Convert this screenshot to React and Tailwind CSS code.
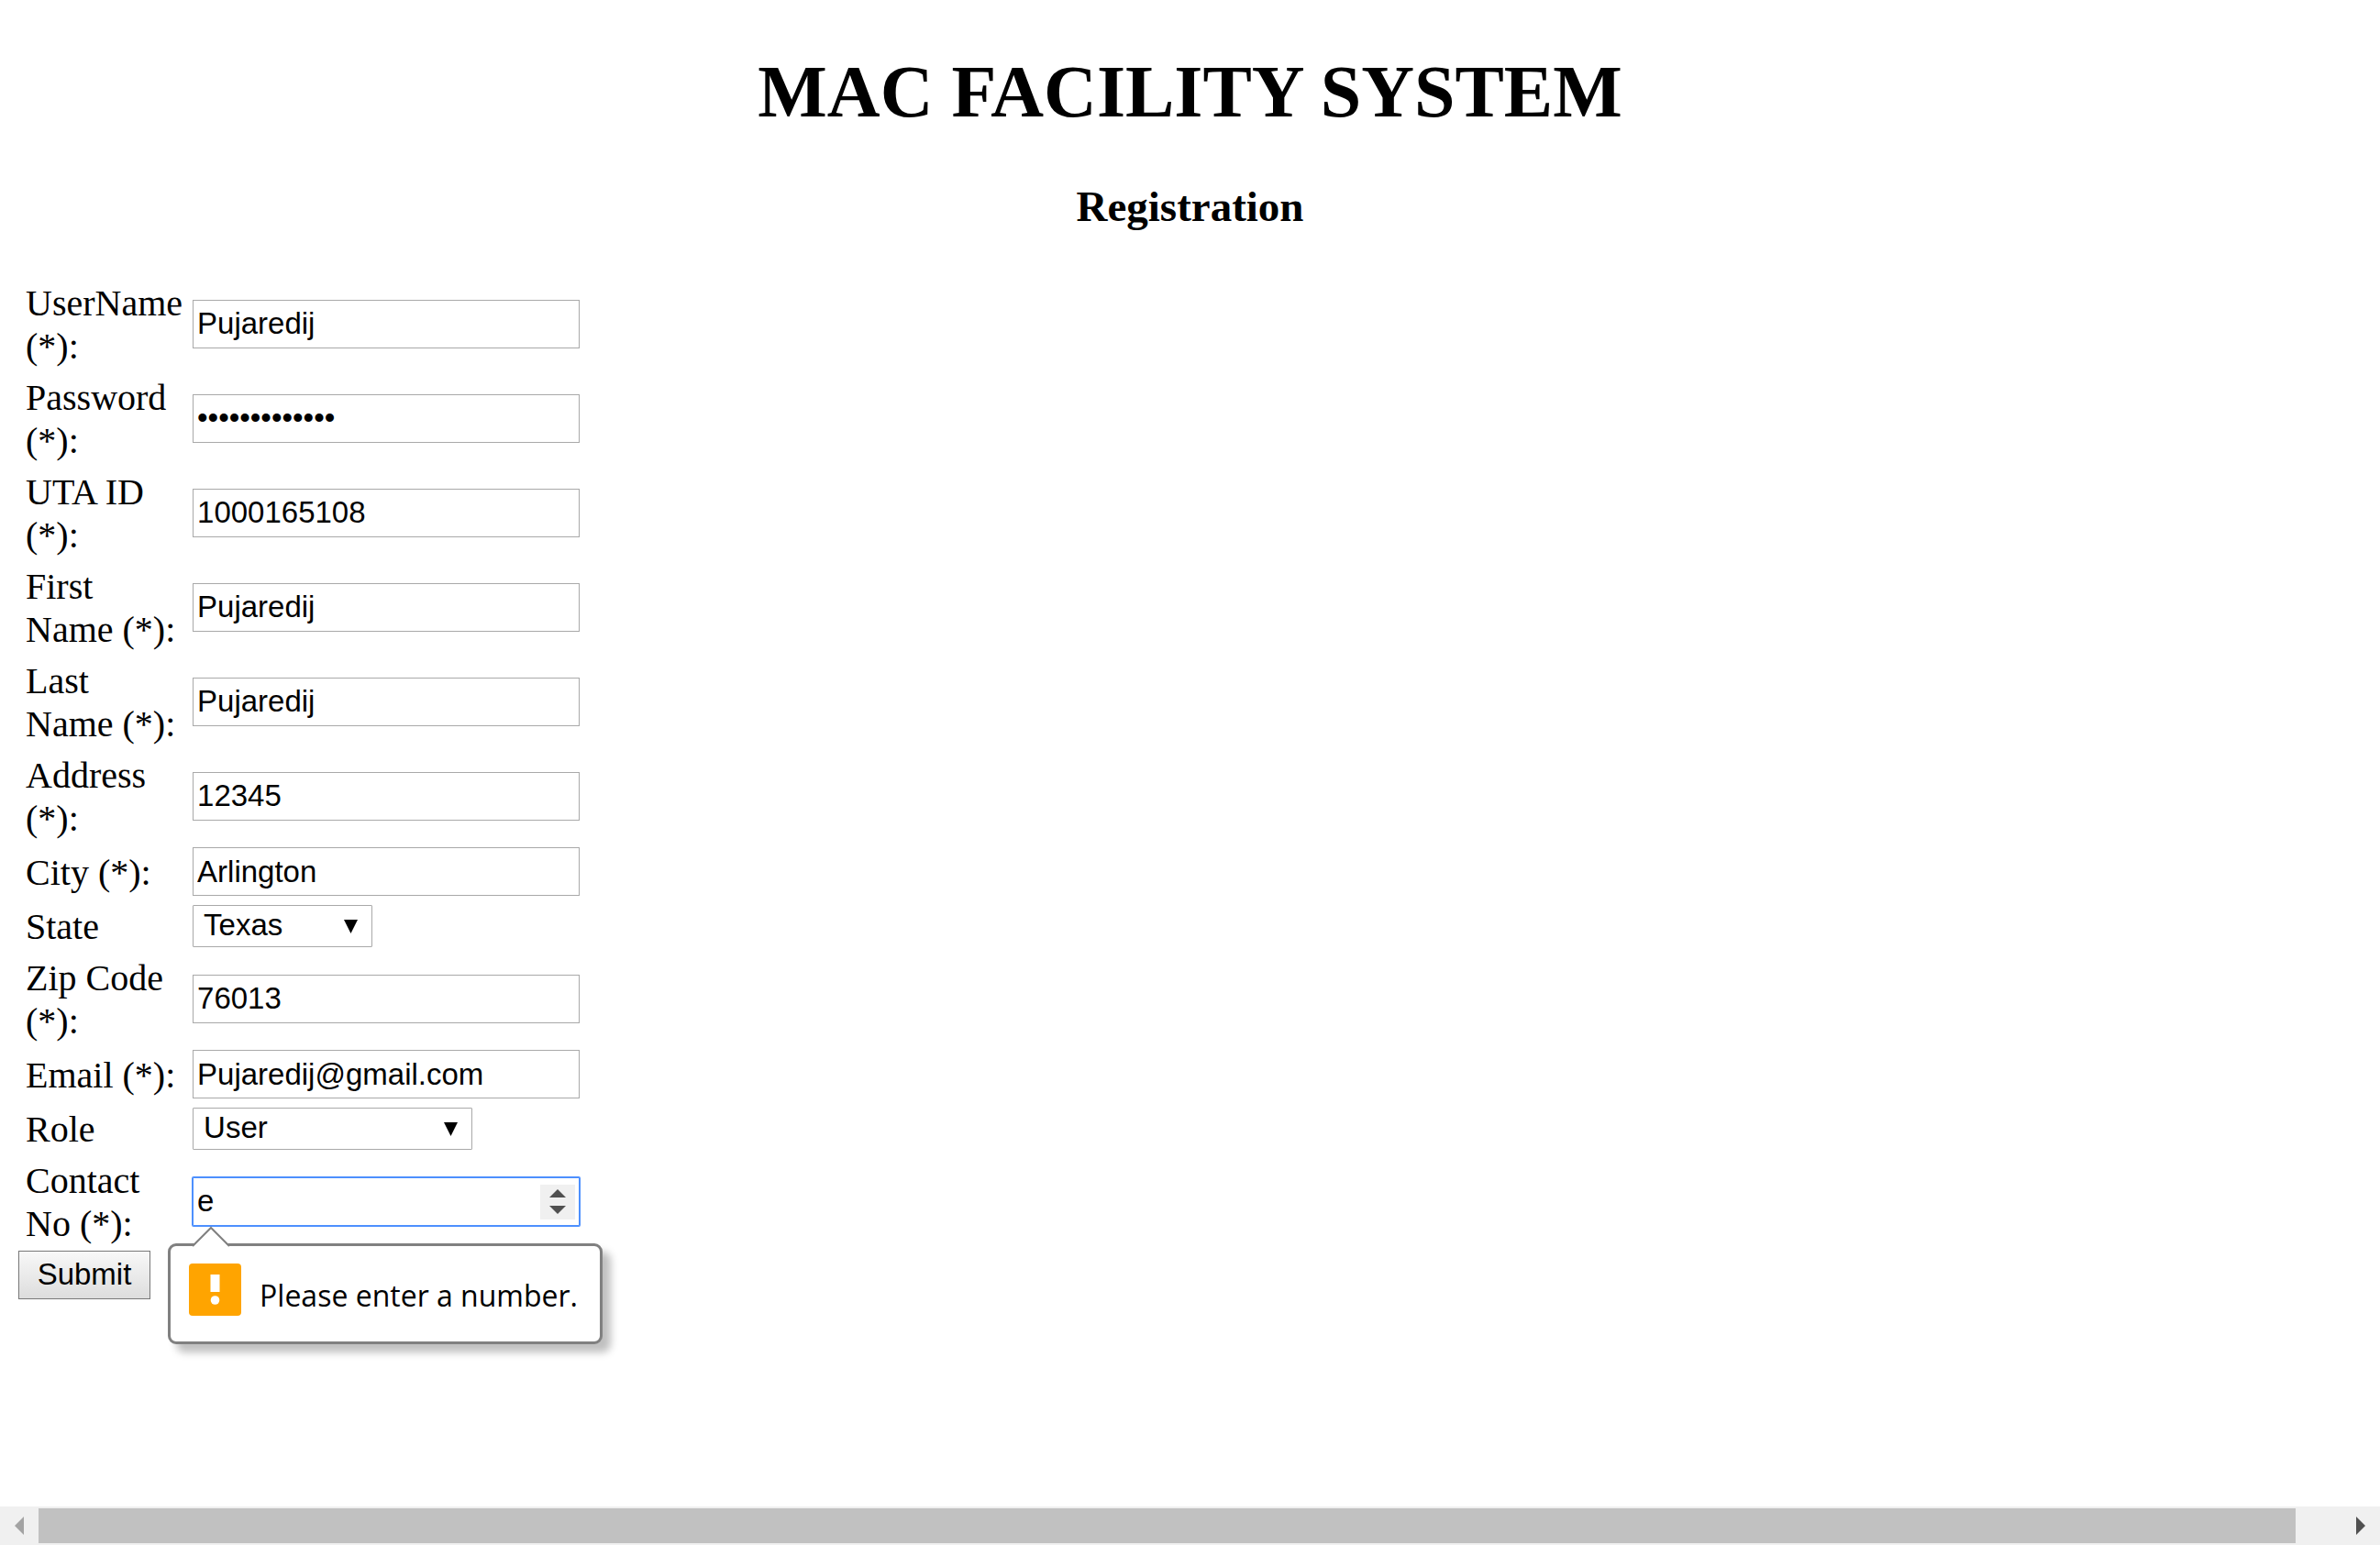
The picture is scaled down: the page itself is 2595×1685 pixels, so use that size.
const boxClass =
  'block h-[53px] w-[422px] border bg-white px-1 font-["Liberation_Sans",Arial,sans-serif] text-[33px] leading-[38px] text-black outline-none';

const fields = [
  { id: 'username', label: 'UserName (*):', value: 'Pujaredij' },
  { id: 'password', label: 'Password (*):', value: 'Pujaredij1234', type: 'password' },
  { id: 'utaid', label: 'UTA ID (*):', value: '1000165108' },
  { id: 'firstname', label: 'First Name (*):', value: 'Pujaredij' },
  { id: 'lastname', label: 'Last Name (*):', value: 'Pujaredij' },
  { id: 'address', label: 'Address (*):', value: '12345' },
  { id: 'city', label: 'City (*):', value: 'Arlington' },
  { id: 'state', label: 'State', value: 'Texas', options: ['Texas', 'California'], width: 'w-[196px]' },
  { id: 'zip', label: 'Zip Code (*):', value: '76013' },
  { id: 'email', label: 'Email (*):', value: 'Pujaredij@gmail.com', type: 'email' },
  { id: 'role', label: 'Role', value: 'User', options: ['User', 'Facility Manager'], width: 'w-[305px]' },
  { id: 'contact', label: 'Contact No (*):', value: 'e', spinner: true },
];

function SelectField({ field }) {
  return (
    <div className={`relative ${field.width}`}>
      <select
        id={field.id}
        defaultValue={field.value}
        className={
          'block h-[46px] w-full appearance-none rounded-[1px] border border-[#a9a9a9] bg-white pl-[11px] pr-10 pb-[2px] font-["Liberation_Sans",Arial,sans-serif] text-[33px] leading-[38px] text-black outline-none'
        }
      >
        {field.options.map((o) => (
          <option key={o}>{o}</option>
        ))}
      </select>
      <svg
        className="pointer-events-none absolute right-4 top-4 h-[15px] w-[15px]"
        viewBox="0 0 15 15"
        aria-hidden="true"
      >
        <path d="M0 0H15L7.5 15Z" fill="#000" />
      </svg>
    </div>
  );
}

function ValidationBubble() {
  return (
    <div
      role="alert"
      className="absolute -left-[27px] top-[72px] z-10 flex h-[110px] w-[474px] items-center rounded-[9px] border-[3px] border-[#808080] bg-white pl-5 shadow-[9px_9px_9px_rgba(0,0,0,0.25)]"
    >
      <svg
        className="absolute -top-[22px] left-[22px] h-[23px] w-[44px]"
        viewBox="0 0 44 23"
        aria-hidden="true"
      >
        <path d="M2 23L22 2L42 23Z" fill="#fff" />
        <path d="M2 22L22 2L42 22" fill="none" stroke="#808080" strokeWidth="2" />
      </svg>
      <svg className="mb-2 h-[57px] w-[57px] shrink-0" viewBox="0 0 57 57" aria-hidden="true">
        <rect width="57" height="57" rx="4" fill="#ffa400" />
        <rect x="23.500" y="12" width="10" height="19" fill="#fff" />
        <circle cx="28.500" cy="40" r="4.800" fill="#fff" />
      </svg>
      <span className='ml-5 mt-1 whitespace-nowrap font-["Open_Sans","Noto_Sans",sans-serif] text-[32px] leading-[44px] text-black'>
        Please enter a number.
      </span>
    </div>
  );
}

function NumberField({ field }) {
  return (
    <div className="relative w-[422px]">
      <input
        id={field.id}
        type="text"
        inputMode="numeric"
        defaultValue={field.value}
        aria-invalid="true"
        className={`${boxClass} rounded-[1px] border-[#4d90fe] ring-1 ring-[#4d90fe]`}
      />
      <div className="absolute right-[5px] top-2 flex h-[38px] w-[38px] flex-col bg-[#f0f0f0]">
        <button type="button" aria-label="Increase" className="flex flex-1 items-end justify-center pb-1">
          <svg className="h-[9px] w-[18px]" viewBox="0 0 18 9" aria-hidden="true">
            <path d="M0 9L9 0L18 9Z" fill="#505050" />
          </svg>
        </button>
        <button type="button" aria-label="Decrease" className="flex flex-1 items-start justify-center pt-[5px]">
          <svg className="h-[9px] w-[18px]" viewBox="0 0 18 9" aria-hidden="true">
            <path d="M0 0L9 9L18 0Z" fill="#505050" />
          </svg>
        </button>
      </div>
      <ValidationBubble />
    </div>
  );
}

function Control({ field }) {
  if (field.options) return <SelectField field={field} />;
  if (field.spinner) return <NumberField field={field} />;
  return (
    <input
      id={field.id}
      type={field.type || 'text'}
      defaultValue={field.value}
      className={`${boxClass} border-[#a9a9a9]`}
    />
  );
}

function ScrollBar() {
  return (
    <div className="flex h-[42px] w-full bg-[#f0f0f0]">
      <button type="button" aria-label="Scroll left" className="flex w-[42px] items-center justify-center">
        <svg className="h-5 w-[10px]" viewBox="0 0 10 20" aria-hidden="true">
          <path d="M10 0V20L0 10Z" fill="#a3a3a3" />
        </svg>
      </button>
      <div className="flex-1 py-[2px]">
        <div className="h-full w-[98%] bg-[#c1c1c1]" />
      </div>
      <button type="button" aria-label="Scroll right" className="flex w-[42px] items-center justify-center">
        <svg className="h-5 w-[10px]" viewBox="0 0 10 20" aria-hidden="true">
          <path d="M0 0V20L10 10Z" fill="#505050" />
        </svg>
      </button>
    </div>
  );
}

export default function App() {
  return (
    <div className='flex min-h-screen flex-col bg-white font-["Liberation_Serif","Times_New_Roman",serif] text-black'>
      <main className="flex-1 px-5 pt-[54px]">
        <h1 className="text-center text-[80px] font-bold leading-[92px]">MAC FACILITY SYSTEM</h1>
        <h2 className="mt-[52px] text-center text-[47px] font-bold leading-[54px]">Registration</h2>
        <form className="mt-[47px]" onSubmit={(e) => e.preventDefault()}>
          <table className="border-separate border-spacing-[5px]">
            <tbody>
              {fields.map((f) => (
                <tr key={f.id}>
                  <td className="w-[177px] px-[3px] pb-px pt-[3px] text-[40px] leading-[47px]">
                    <label htmlFor={f.id} className="block">
                      {f.label}
                    </label>
                  </td>
                  <td className="px-[3px] py-[2px]">
                    <Control field={f} />
                  </td>
                </tr>
              ))}
            </tbody>
          </table>
          <button
            type="submit"
            className='block h-[53px] w-[144px] border border-[#777777] bg-linear-to-b from-[#f8f8f8] to-[#dddddd] pb-[2px] text-center font-["Liberation_Sans",Arial,sans-serif] text-[33px] leading-[38px]'
          >
            Submit
          </button>
        </form>
      </main>
      <ScrollBar />
    </div>
  );
}
